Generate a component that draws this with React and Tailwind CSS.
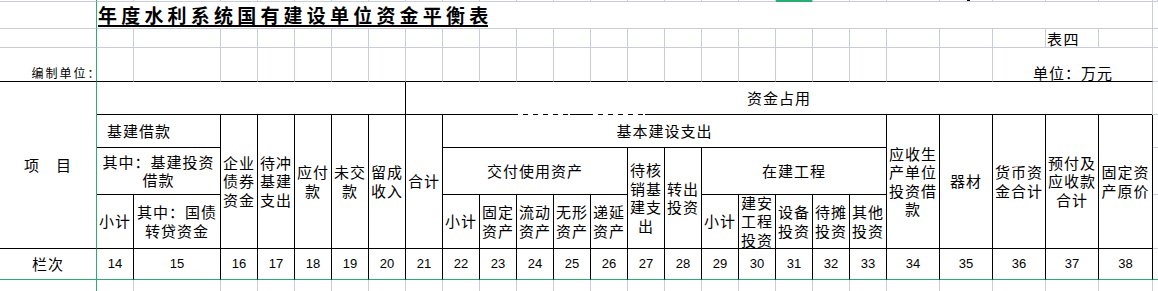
import React from 'react';

// spreadsheet column widths (px): row header, then the sheet columns, then the cut-off edge
const W = [
    'w-[97px]', 'w-[37px]', 'w-[87px]',
    ...Array(18).fill('w-[37px]'),
    'w-[53px]', 'w-[53px]', 'w-[53px]', 'w-[53px]', 'w-[54px]',
    'flex-1',
];

const HEAD = [
    { p: 'col-start-2 col-span-2 row-start-2', t: ['基建借款'], left: true },
    { p: 'col-start-4 row-start-2 row-span-3', t: ['企业', '债券', '资金'] },
    { p: 'col-start-5 row-start-2 row-span-3', t: ['待冲', '基建', '支出'] },
    { p: 'col-start-6 row-start-2 row-span-3', t: ['应付', '款'] },
    { p: 'col-start-7 row-start-2 row-span-3', t: ['未交', '款'] },
    { p: 'col-start-8 row-start-2 row-span-3', t: ['留成', '收入'] },
    { p: 'col-start-9 row-start-2 row-span-3', t: ['合计'] },
    { p: 'col-start-10 col-span-12 row-start-2', t: ['基本建设支出'] },
    { p: 'col-start-22 row-start-2 row-span-3', t: ['应收生', '产单位', '投资借', '款'] },
    { p: 'col-start-23 row-start-2 row-span-3', t: ['器材'] },
    { p: 'col-start-24 row-start-2 row-span-3', t: ['货币资', '金合计'] },
    { p: 'col-start-25 row-start-2 row-span-3', t: ['预付及', '应收款', '合计'] },
    { p: 'col-start-26 row-start-2 row-span-3', t: ['固定资', '产原价'] },
    { p: 'col-start-2 col-span-2 row-start-3', t: ['其中：基建投资', '借款'] },
    { p: 'col-start-10 col-span-5 row-start-3', t: ['交付使用资产'] },
    { p: 'col-start-15 row-start-3 row-span-2', t: ['待核', '销基', '建支', '出'] },
    { p: 'col-start-16 row-start-3 row-span-2', t: ['转出', '投资'] },
    { p: 'col-start-17 col-span-5 row-start-3', t: ['在建工程'] },
    { p: 'col-start-2 row-start-4', t: ['小计'] },
    { p: 'col-start-3 row-start-4', t: ['其中：国债', '转贷资金'] },
    { p: 'col-start-10 row-start-4', t: ['小计'] },
    { p: 'col-start-11 row-start-4', t: ['固定', '资产'] },
    { p: 'col-start-12 row-start-4', t: ['流动', '资产'] },
    { p: 'col-start-13 row-start-4', t: ['无形', '资产'] },
    { p: 'col-start-14 row-start-4', t: ['递延', '资产'] },
    { p: 'col-start-17 row-start-4', t: ['小计'] },
    { p: 'col-start-18 row-start-4', t: ['建安', '工程', '投资'] },
    { p: 'col-start-19 row-start-4', t: ['设备', '投资'] },
    { p: 'col-start-20 row-start-4', t: ['待摊', '投资'] },
    { p: 'col-start-21 row-start-4', t: ['其他', '投资'] },
];

const NUMS = Array.from({ length: 25 }, (_, i) => i + 14);

const DASH = 'bg-[repeating-linear-gradient(90deg,#000_0px,#000_5px,transparent_5px,transparent_10px)]';

const Cell = ({ p, t, left }) => (
    <div className={`${p} flex items-center ${left ? 'justify-start pl-[10px]' : 'justify-center'} border-r border-b border-black text-center text-[15px] leading-[18.5px] tracking-[1px]`}>
        <div>
            {t.map((line, i) => (
                <div key={i} className="whitespace-nowrap">{line}</div>
            ))}
        </div>
    </div>
);

const App = () => {
    return (
        <div className="w-[1158px] h-[291px] overflow-hidden bg-white text-black font-['Noto_Sans_CJK_SC',sans-serif] flex flex-col">
            {/* column header edge */}
            <div className="flex h-[2px] shrink-0">
                {W.map((w, i) => (
                    <div
                        key={i}
                        className={`${w} shrink-0 border-r border-b ${i === 0 ? 'border-r-[#27ae74] border-b-[#c8cdd9]' : 'border-[#c8cdd9]'} ${i === 18 ? 'bg-[#27ae74] border-b-[#27ae74]' : ''}`}
                    >
                        {i === 22 && <div className="ml-[27px] w-[3px] h-px bg-black" />}
                    </div>
                ))}
            </div>

            {/* title */}
            <div className="flex h-[27px] shrink-0">
                <div className="w-[97px] shrink-0 border-r border-b border-r-[#27ae74] border-b-[#c8cdd9]" />
                <div className="w-[1056px] shrink-0 flex items-center pl-px pt-[2px] border-r border-b border-[#c8cdd9]">
                    <span className="inline-block border-b-2 border-black text-[19px] font-bold leading-[20px] tracking-[4.2px]">
                        年度水利系统国有建设单位资金平衡<span className="tracking-normal">表</span>
                    </span>
                </div>
                <div className="flex-1 border-b border-[#c8cdd9]" />
            </div>

            {/* 表四 */}
            <div className="flex h-[19px] shrink-0">
                {W.map((w, i) => (
                    <div
                        key={i}
                        className={`${w} shrink-0 flex items-end border-b ${i === 26 ? '' : 'border-r'} ${i === 0 ? 'border-r-[#27ae74] border-b-[#c8cdd9]' : 'border-[#c8cdd9]'}`}
                    >
                        {i === 24 && <span className="pl-px text-[15px] leading-[17px] tracking-[1.5px] whitespace-nowrap">表四</span>}
                    </div>
                ))}
            </div>

            {/* 编制单位 / 单位 */}
            <div className="flex h-[34px] shrink-0">
                <div className="w-[97px] shrink-0 flex items-end justify-end pb-[2px] border-r border-b border-r-[#27ae74] border-b-black text-[12px] leading-[13px] tracking-[2px] whitespace-nowrap">
                    编制单位<span className="tracking-[-3.5px]">：</span>
                </div>
                {W.slice(1, 23).map((w, i) => (
                    <div key={i} className={`${w} shrink-0 border-r border-b border-r-[#c8cdd9] border-b-black`} />
                ))}
                <div className="w-[160px] shrink-0 flex items-end justify-end pr-[39px] border-r border-b border-r-[#c8cdd9] border-b-black text-[15px] leading-[17px] tracking-[1px] whitespace-nowrap">
                    单位：万元
                </div>
                <div className="flex-1 border-b border-[#c8cdd9]" />
            </div>

            {/* header table */}
            <div className="grid shrink-0 grid-cols-[97px_37px_87px_repeat(18,37px)_53px_53px_53px_53px_54px_1fr] grid-rows-[33px_33px_47px_54px_31px]">
                <div className="col-start-1 row-start-1 row-span-4 flex items-center justify-center border-r border-b border-r-[#27ae74] border-b-black text-[15px] tracking-[1px]">
                    项　目
                </div>
                <div className="col-start-2 col-span-7 row-start-1 border-r border-b border-black" />
                <div className="col-start-9 col-span-18 row-start-1 flex flex-col border-r border-[#c8cdd9]">
                    <div className="flex flex-1 items-center justify-center text-[15px] tracking-[1px]">资金占用</div>
                    <div className="flex h-px">
                        <div className="w-[107px] bg-black" />
                        <div className={`w-[57px] ${DASH}`} />
                        <div className="w-[18px] bg-black" />
                        <div className={`w-[57px] ${DASH}`} />
                        <div className="flex-1 bg-black" />
                    </div>
                </div>
                <div className="col-start-27 row-start-1 border-b border-[#c8cdd9]" />
                <div className="col-start-27 row-start-2 border-b border-[#c8cdd9]" />
                <div className="col-start-27 row-start-3 border-b border-[#c8cdd9]" />
                <div className="col-start-27 row-start-4 border-b border-[#c8cdd9]" />
                <div className="col-start-27 row-start-5 border-b border-[#27ae74]" />

                {HEAD.map((c, i) => (
                    <Cell key={i} {...c} />
                ))}

                <div className="col-start-1 row-start-5 flex items-center justify-center border-r border-b border-[#27ae74] text-[15px] tracking-[1px]">
                    栏次
                </div>
                {NUMS.map((n) => (
                    <div key={n} className="row-start-5 flex items-center justify-center border-r border-b border-r-black border-b-[#27ae74] font-['Liberation_Sans',sans-serif] text-[13px]">
                        {n}
                    </div>
                ))}
            </div>

            {/* next sheet row */}
            <div className="flex flex-1">
                {W.map((w, i) => (
                    <div key={i} className={`${w} shrink-0 ${i === 26 ? '' : 'border-r'} ${i === 0 ? 'border-[#27ae74]' : 'border-[#c8cdd9]'}`} />
                ))}
            </div>
        </div>
    );
};

export default App;
